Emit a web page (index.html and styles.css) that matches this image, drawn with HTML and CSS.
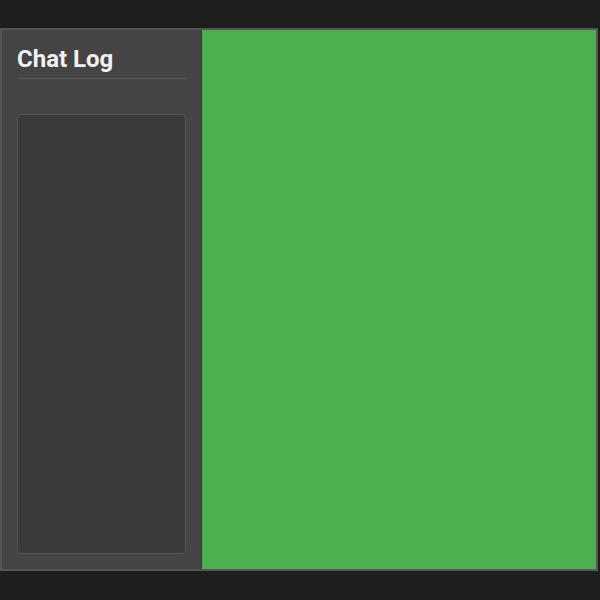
FILE: index.html
```html
<!DOCTYPE html>
<html>
  <head>
    <link rel="stylesheet" href="styles.css">
  </head>
  <body>
    <div class="app">
      <div class="sidebar">
        <h2 class="sidebar-title">Chat Log</h2>
        <div class="chat-log" id="chatLog"></div>
      </div>
      <div class="stage" id="stage"></div>
    </div>
  </body>
</html>
```

FILE: styles.css
```css
* {
  box-sizing: border-box;
  margin: 0;
  padding: 0;
}

body {
  background: #1e1e1e;
  font-family: Roboto, "Noto Sans", sans-serif;
  padding-top: 28px;
}

.app {
  display: flex;
  width: 598px;
  height: 543px;
  border: solid 2px #555555;
}

.sidebar {
  display: flex;
  flex-direction: column;
  width: 199px;
  padding: 15px;
  background: #444444;
}

.sidebar-title {
  color: #f2f2f2;
  font-size: 24px;
  font-weight: 700;
  line-height: 28px;
  padding-bottom: 5px;
  border-bottom: solid 1px #5a5a5a;
}

.chat-log {
  flex: 1;
  margin-top: 35px;
  background: #3b3b3b;
  border: solid 1px #555555;
  border-radius: 4px;
}

.stage {
  flex: 1;
  background: #4caf50;
  border-left: solid 1px #3a3a3a;
}
```
